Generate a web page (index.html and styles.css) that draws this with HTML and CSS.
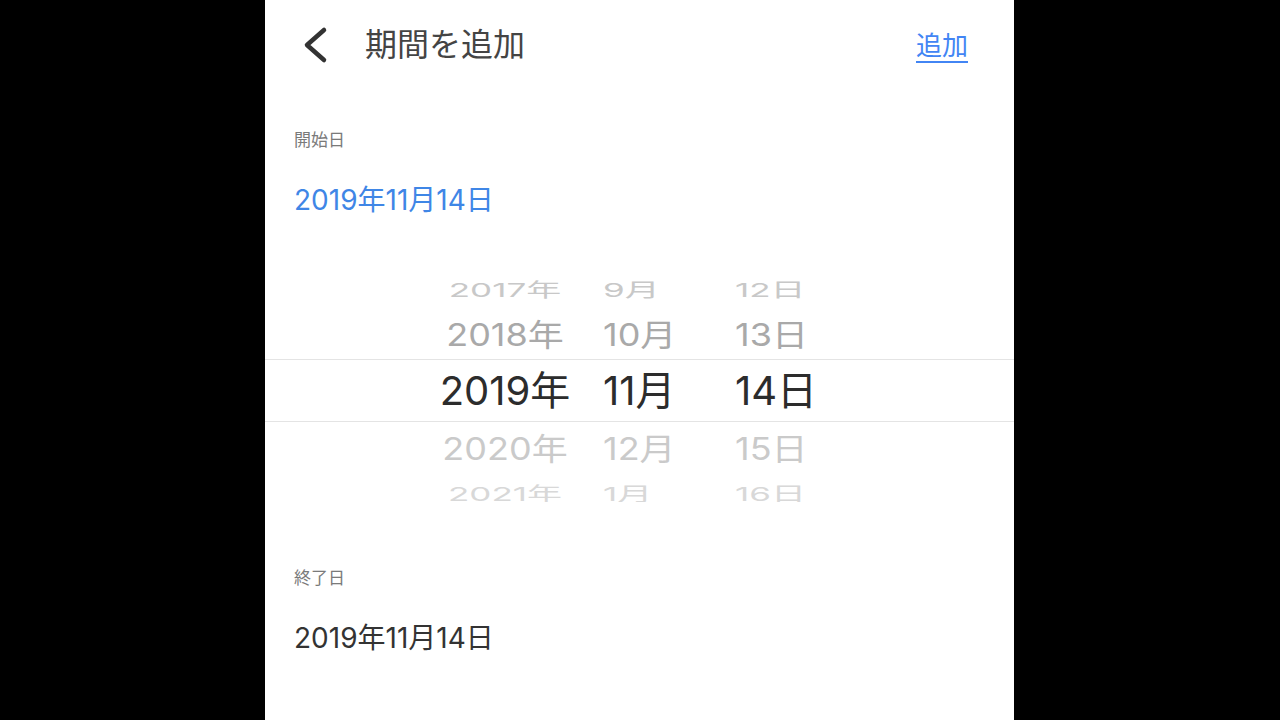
FILE: index.html
```html
<!DOCTYPE html>
<html lang="ja">
<head>
    <meta charset="UTF-8">
    <meta name="viewport" content="width=device-width, initial-scale=1.0">
    <title>期間を追加</title>
    <link rel="stylesheet" href="styles.css">
</head>
<body>

<main class="screen">
    <header class="topbar">
        <a class="back" href="#" aria-label="戻る">
            <svg width="28" height="40" viewBox="0 0 28 40">
                <polyline points="23,5 6,20 23,35" fill="none" stroke="#333" stroke-width="4.5" stroke-linecap="round" stroke-linejoin="round"/>
            </svg>
        </a>
        <h1 class="title">期間を追加</h1>
        <a class="add-link" href="#">追加</a>
    </header>

    <section class="field">
        <div class="field-label">開始日</div>
        <div class="field-value active">2019年11月14日</div>
    </section>

    <!-- date wheel -->
    <section class="picker">
        <div class="row far top">
            <span class="c-year"><span>2017年</span></span>
            <span class="c-month"><span>9月</span></span>
            <span class="c-day"><span>12日</span></span>
        </div>
        <div class="row near top">
            <span class="c-year"><span>2018年</span></span>
            <span class="c-month"><span>10月</span></span>
            <span class="c-day"><span>13日</span></span>
        </div>
        <div class="row selected">
            <span class="c-year"><span>2019年</span></span>
            <span class="c-month"><span>11月</span></span>
            <span class="c-day"><span>14日</span></span>
        </div>
        <div class="row near bottom">
            <span class="c-year"><span>2020年</span></span>
            <span class="c-month"><span>12月</span></span>
            <span class="c-day"><span>15日</span></span>
        </div>
        <div class="row far bottom">
            <span class="c-year"><span>2021年</span></span>
            <span class="c-month"><span>1月</span></span>
            <span class="c-day"><span>16日</span></span>
        </div>
    </section>

    <section class="field end">
        <div class="field-label">終了日</div>
        <div class="field-value">2019年11月14日</div>
    </section>
</main>

</body>
</html>
```

FILE: styles.css
```css
/* Page frame */
body {
    margin: 0;
    padding: 0;
    background-color: #000;
    font-family: Inter, "Noto Sans CJK JP", sans-serif;
}

.screen {
    width: 749px;
    height: 720px;
    margin-left: 265px;
    background: #fff;
    overflow: hidden;
}

/* Top bar */
.topbar {
    height: 90px;
    display: flex;
    align-items: center;
    padding: 0 46px 0 36px;
}

.back {
    display: flex;
    margin-right: 36px;
}

.title {
    flex: 1;
    margin: 0;
    font-size: 32px;
    font-weight: 400;
    color: #444;
    line-height: 1;
}

.add-link {
    font-size: 26px;
    line-height: 1;
    color: #4285f4;
    text-decoration: none;
    border-bottom: 2px solid #4285f4;
    padding-bottom: 2px;
    margin-top: 6px;
}

/* Start / end fields */
.field {
    padding-left: 29px;
}

.field-label {
    margin-top: 40px;
    font-size: 17px;
    line-height: 20px;
    color: #7a7a7a;
}

.field-value {
    margin-top: 35px;
    font-size: 28px;
    line-height: 30px;
    color: #333;
}

.field-value.active {
    color: #3f86e6;
}

.field.end .field-label {
    margin-top: 66px;
}

/* Wheel picker */
.picker {
    margin-top: 55px;
    height: 232px;
    overflow: hidden;
}

.row {
    display: flex;
    align-items: center;
    line-height: 1;
}

.row > span > span {
    display: inline-block;
}

.c-year {
    width: 150px;
    margin-left: 165px;
    text-align: center;
}

.c-month {
    width: 132px;
    margin-left: 23px;
}

.row.selected {
    height: 61px;
    border-top: 1px solid #e4e4e4;
    border-bottom: 1px solid #e4e4e4;
    font-size: 40px;
    color: #2c2c2c;
}

.row.near {
    font-size: 36px;
}

.row.near > span > span {
    transform: scaleY(0.86);
}

.row.near.top {
    height: 49px;
    color: #a9a9a9;
}

.row.near.bottom {
    height: 54px;
    color: #cacaca;
}

.row.far {
    font-size: 35px;
}

.row.far > span > span {
    transform: scaleY(0.55);
}

.row.far.top {
    height: 40px;
    color: #c8c8c8;
}

.row.far.bottom {
    height: 36px;
    color: #d8d8d8;
}
```
